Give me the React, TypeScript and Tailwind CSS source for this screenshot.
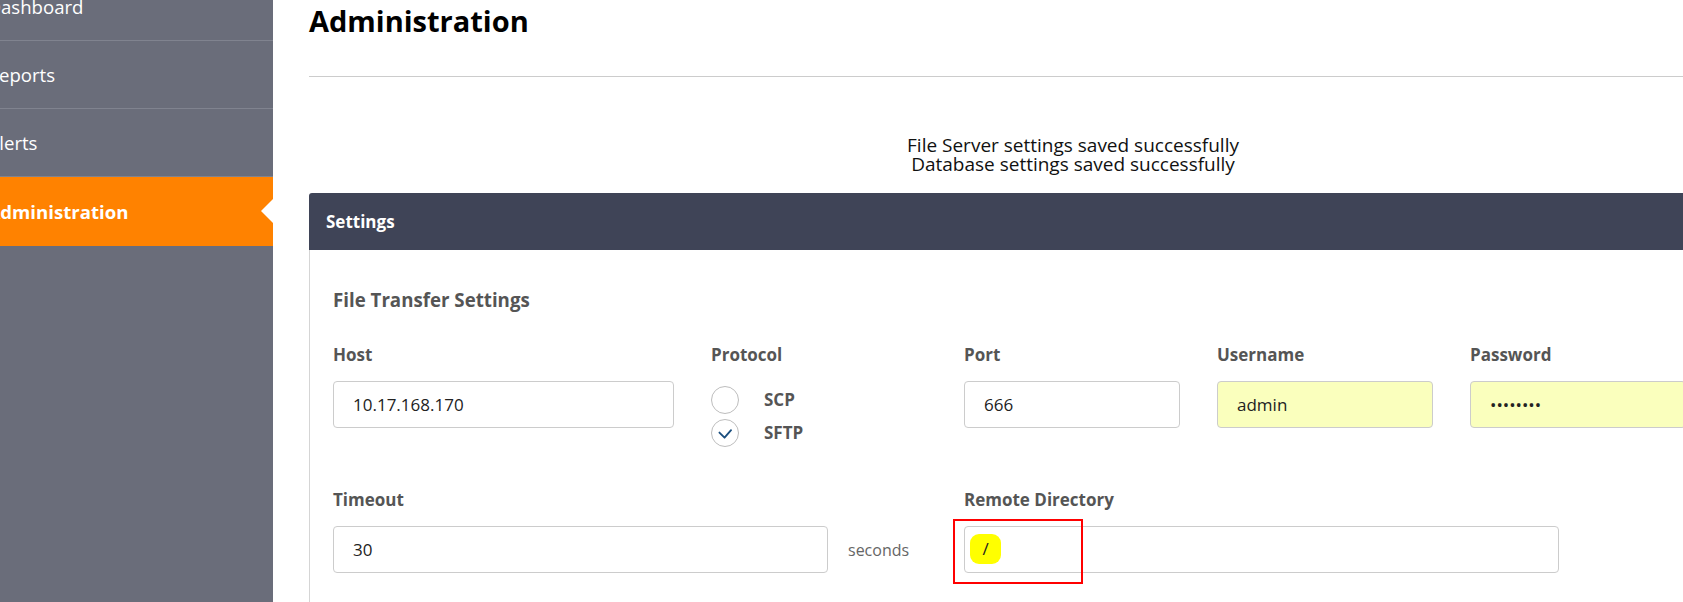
import React from 'react';

const NAV = [
  { label: 'Dashboard', active: false },
  { label: 'Reports', active: false },
  { label: 'Alerts', active: false },
  { label: 'Administration', active: true },
];

const inputCls =
  'h-[47px] rounded-[4px] border border-[#cccccc] px-[19px] text-[17px] text-[#222222] outline-none';

const Label: React.FC<{ children: React.ReactNode }> = ({ children }) => (
  <div className="text-[17px] leading-[22px] font-bold text-[#555555]">{children}</div>
);

const Radio: React.FC<{ label: string; checked?: boolean }> = ({ label, checked }) => (
  <label className="flex items-center gap-[25px]">
    <span className="flex h-[28px] w-[28px] items-center justify-center rounded-full border border-[#bdbdbd] bg-white">
      {checked && (
        <svg width="28" height="28" viewBox="0 0 28 28" fill="none">
          <polyline points="8,13.5 13.5,19 20.5,11" stroke="#1b4f7f" strokeWidth="2" strokeLinecap="round" strokeLinejoin="round" />
        </svg>
      )}
    </span>
    <span className="text-[17px] font-bold text-[#555555]">{label}</span>
  </label>
);

export default function App() {
  return (
    <div className="flex h-[602px] w-full overflow-hidden bg-white font-['Open_Sans',sans-serif]">
      <aside className="w-[273px] shrink-0 overflow-hidden bg-[#6a6d7a]">
        <ul className="-mt-[27px]">
          {NAV.map((item) =>
            item.active ? (
              <li key={item.label} className="relative flex h-[69px] items-center bg-[#ff8200]">
                <span className="-ml-[12.5px] text-[18.6px] font-bold text-white">{item.label}</span>
                <span className="absolute right-0 top-[22px] h-0 w-0 border-y-[12.5px] border-r-[12px] border-y-transparent border-r-white" />
              </li>
            ) : (
              <li key={item.label} className="flex h-[68px] items-center border-b border-[#80838f]">
                <span className="-ml-[12.5px] text-[18.6px] text-white">{item.label}</span>
              </li>
            )
          )}
        </ul>
      </aside>

      <main className="min-w-0 flex-1 overflow-hidden pl-[36px]">
        <div className="w-[1528px]">
          <h1 className="mt-[1px] text-[29px] leading-[40px] font-bold text-black">Administration</h1>
          <hr className="mt-[35px] border-[#cccccc]" />

          <div className="mt-[59px] text-center text-[19px] leading-[18.6px] text-[#111111]">
            <div>File Server settings saved successfully</div>
            <div>Database settings saved successfully</div>
          </div>

          <section className="mt-[20px]">
            <div className="flex h-[57px] items-center rounded-t-[3px] bg-[#3f4457] px-[17px] text-[17px] font-bold text-white">
              Settings
            </div>
            <div className="h-[400px] border-x border-[#d5d5d5] px-[23px] pt-[37px]">
              <h2 className="text-[18.7px] leading-[25px] font-bold text-[#555555]">File Transfer Settings</h2>

              <div className="mt-[32px] flex items-start">
                <div className="w-[378px]">
                  <Label>Host</Label>
                  <input readOnly value="10.17.168.170" className={`mt-[15px] w-[341px] ${inputCls}`} />
                </div>
                <div className="w-[253px]">
                  <Label>Protocol</Label>
                  <div className="mt-[20px] flex flex-col gap-[5px]">
                    <Radio label="SCP" />
                    <Radio label="SFTP" checked />
                  </div>
                </div>
                <div className="w-[253px]">
                  <Label>Port</Label>
                  <input readOnly value="666" className={`mt-[15px] w-[216px] ${inputCls}`} />
                </div>
                <div className="w-[253px]">
                  <Label>Username</Label>
                  <input readOnly value="admin" className={`mt-[15px] w-[216px] bg-[#faffbd] ${inputCls}`} />
                </div>
                <div className="w-[253px]">
                  <Label>Password</Label>
                  <input type="password" readOnly value="password" className={`mt-[15px] w-[216px] bg-[#faffbd] ${inputCls}`} />
                </div>
              </div>

              <div className="mt-[42px] flex">
                <div className="w-[631px]">
                  <Label>Timeout</Label>
                  <div className="mt-[15px] flex items-center">
                    <input readOnly value="30" className={`w-[495px] ${inputCls}`} />
                    <span className="ml-[20px] text-[16px] text-[#666666]">seconds</span>
                  </div>
                </div>
                <div>
                  <Label>Remote Directory</Label>
                  <div className="relative mt-[15px] w-[595px]">
                    <input readOnly value="" className={`w-[595px] ${inputCls}`} />
                    <span className="absolute left-[6px] top-[8px] flex h-[30px] w-[31px] items-center justify-center rounded-[9px] bg-[#ffff00] text-[17px] text-[#222222]">
                      /
                    </span>
                    <span className="absolute left-[-11px] top-[-7px] h-[65px] w-[130px] border-2 border-[#ff0000]" />
                  </div>
                </div>
              </div>
            </div>
          </section>
        </div>
      </main>
    </div>
  );
}
